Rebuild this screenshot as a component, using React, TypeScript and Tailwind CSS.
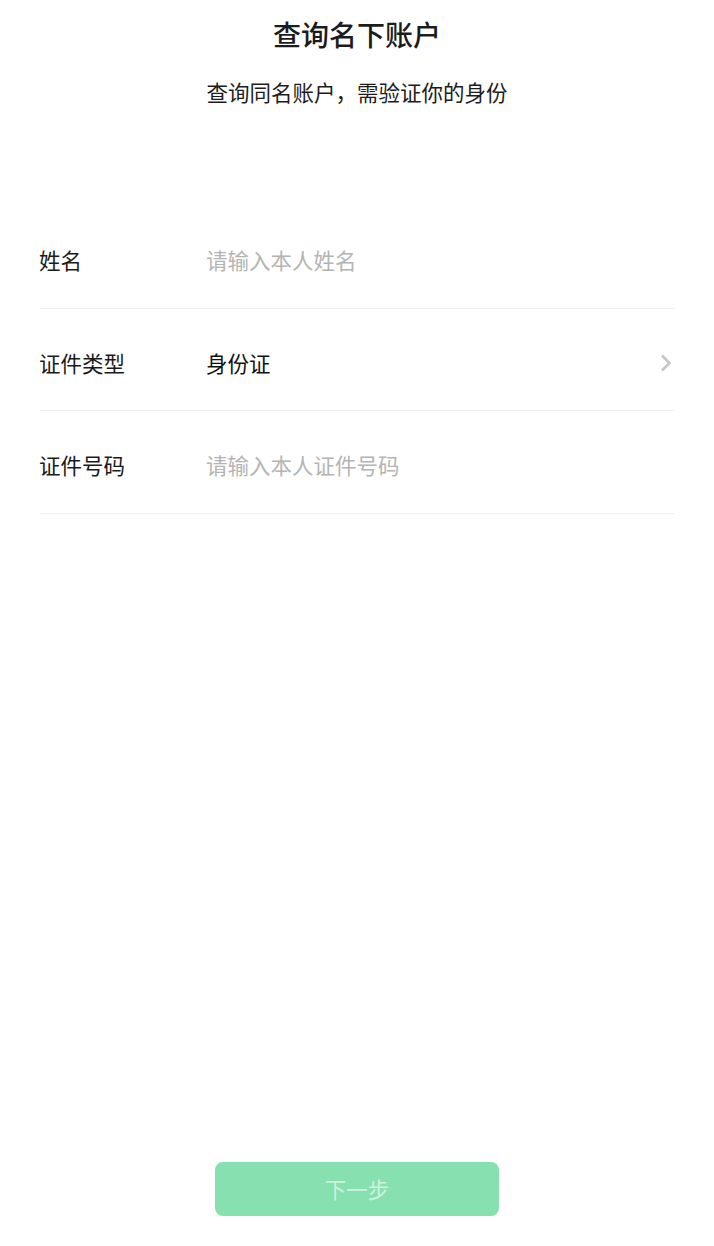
import React from "react";

const font = { fontFamily: '"Noto Sans CJK SC", "Noto Sans", sans-serif' };

function Row({
  label,
  value,
  placeholder,
  chevron,
}: {
  label: string;
  value?: string;
  placeholder?: string;
  chevron?: boolean;
}) {
  return (
    <div className="flex h-[102.5px] items-start border-b border-[#efefef] pt-[41px]">
      <div className="-ml-[1px] w-[167px] shrink-0 text-[21.5px] leading-[26px] text-[#1a1a1a]">{label}</div>
      <div className="flex flex-1 items-center">
        {value ? (
          <span className="flex-1 text-[21.5px] leading-[26px] text-[#111111]">{value}</span>
        ) : (
          <span className="flex-1 text-[21.5px] leading-[26px] text-[#b4b4b4]">{placeholder}</span>
        )}
        {chevron && (
          <svg width="12" height="18" viewBox="0 0 12 18" className="mr-[2px]">
            <path d="M2 1.5 L9.5 9 L2 16.5" fill="none" stroke="#c6c6c6" strokeWidth="2.6" />
          </svg>
        )}
      </div>
    </div>
  );
}

export default function App() {
  return (
    <div className="flex min-h-screen flex-col bg-white" style={font}>
      <div className="pt-[16px] text-center text-[28px] font-medium leading-[36px] text-[#1c1c1c]">
        查询名下账户
      </div>
      <div className="mt-[25px] text-center text-[21.5px] leading-[30px] text-[#1c1c1c]">
        查询同名账户，需验证你的身份
      </div>
      <div className="mt-[99px] px-[40px]">
        <Row label="姓名" placeholder="请输入本人姓名" />
        <Row label="证件类型" value="身份证" chevron />
        <Row label="证件号码" placeholder="请输入本人证件号码" />
      </div>
      <div className="mt-auto flex justify-center pb-[30px]">
        <button className="flex h-[54px] w-[284px] items-center justify-center rounded-[8px] bg-[#86e0b0] text-[21.5px] text-white/60">
          下一步
        </button>
      </div>
    </div>
  );
}
